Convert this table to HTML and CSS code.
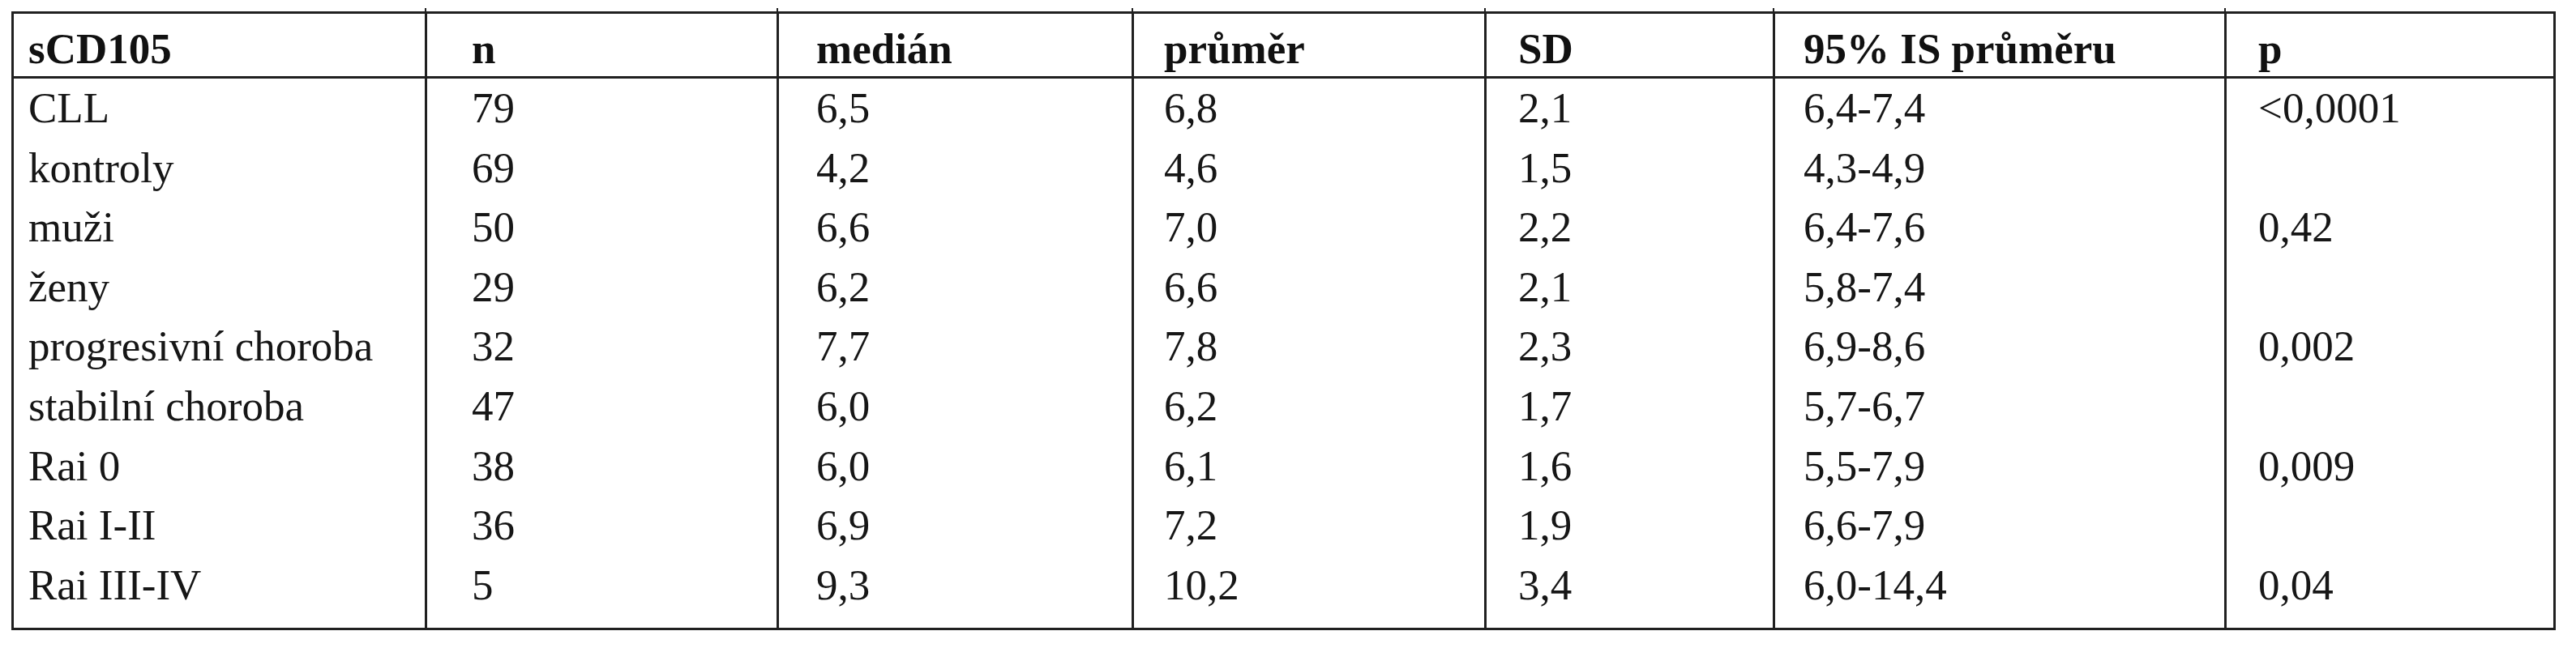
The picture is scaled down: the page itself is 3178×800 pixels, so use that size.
FILE: index.html
```html
<!DOCTYPE html>
<html lang="cs">
<head>
<meta charset="utf-8">
<title>sCD105</title>
<link rel="stylesheet" href="styles.css">
</head>
<body>
<table class="stats">
  <colgroup>
    <col class="c1"><col class="c2"><col class="c3"><col class="c4"><col class="c5"><col class="c6"><col class="c7">
  </colgroup>
  <thead>
    <tr><th>sCD105</th><th>n</th><th>medián</th><th>průměr</th><th>SD</th><th>95% IS průměru</th><th>p</th></tr>
  </thead>
  <tbody>
    <tr><td>CLL</td><td>79</td><td>6,5</td><td>6,8</td><td>2,1</td><td>6,4-7,4</td><td>&lt;0,0001</td></tr>
    <tr><td>kontroly</td><td>69</td><td>4,2</td><td>4,6</td><td>1,5</td><td>4,3-4,9</td><td></td></tr>
    <tr><td>muži</td><td>50</td><td>6,6</td><td>7,0</td><td>2,2</td><td>6,4-7,6</td><td>0,42</td></tr>
    <tr><td>ženy</td><td>29</td><td>6,2</td><td>6,6</td><td>2,1</td><td>5,8-7,4</td><td></td></tr>
    <tr><td>progresivní choroba</td><td>32</td><td>7,7</td><td>7,8</td><td>2,3</td><td>6,9-8,6</td><td>0,002</td></tr>
    <tr><td>stabilní choroba</td><td>47</td><td>6,0</td><td>6,2</td><td>1,7</td><td>5,7-6,7</td><td></td></tr>
    <tr><td>Rai 0</td><td>38</td><td>6,0</td><td>6,1</td><td>1,6</td><td>5,5-7,9</td><td>0,009</td></tr>
    <tr><td>Rai I-II</td><td>36</td><td>6,9</td><td>7,2</td><td>1,9</td><td>6,6-7,9</td><td></td></tr>
    <tr><td>Rai III-IV</td><td>5</td><td>9,3</td><td>10,2</td><td>3,4</td><td>6,0-14,4</td><td>0,04</td></tr>
  </tbody>
</table>
</body>
</html>
```
FILE: styles.css
```css
html, body {
  margin: 0;
  padding: 0;
  background: #ffffff;
}

body {
  padding: 14px 0 0 14px;
  font-family: "Liberation Serif", "Times New Roman", serif;
  color: #161616;
}

.stats {
  width: 3139px;
  box-sizing: border-box;
  table-layout: fixed;
  border-collapse: separate;
  border-spacing: 0;
  border: 3px solid #202020;
  font-size: 53px;
}

.c1 { width: 507px; }
.c2 { width: 434px; }
.c3 { width: 438px; }
.c4 { width: 435px; }
.c5 { width: 356px; }
.c6 { width: 557px; }
.c7 { width: 406px; }

.stats th,
.stats td {
  box-sizing: border-box;
  text-align: left;
  vertical-align: top;
  white-space: nowrap;
  padding: 0 0 0 18px;
}

.stats th + th,
.stats td + td {
  border-left: 3px solid #202020;
}

.stats th {
  position: relative;
  font-weight: bold;
  line-height: 60px;
  padding-top: 13px;
  padding-bottom: 4px;
  border-bottom: 3px solid #202020;
  color: #111111;
}

.stats th + th::before {
  content: "";
  position: absolute;
  left: -3px;
  top: -7px;
  width: 2px;
  height: 4px;
  background: #202020;
}

.stats td {
  font-weight: normal;
  line-height: 73.6px;
}

.stats tbody tr:last-child td {
  padding-bottom: 16px;
}

.stats th:nth-child(2), .stats td:nth-child(2) { padding-left: 55px; }
.stats th:nth-child(3), .stats td:nth-child(3) { padding-left: 46px; }
.stats th:nth-child(4), .stats td:nth-child(4) { padding-left: 37px; }
.stats th:nth-child(5), .stats td:nth-child(5) { padding-left: 39px; }
.stats th:nth-child(6), .stats td:nth-child(6) { padding-left: 35px; }
.stats th:nth-child(7), .stats td:nth-child(7) { padding-left: 39px; }
```
